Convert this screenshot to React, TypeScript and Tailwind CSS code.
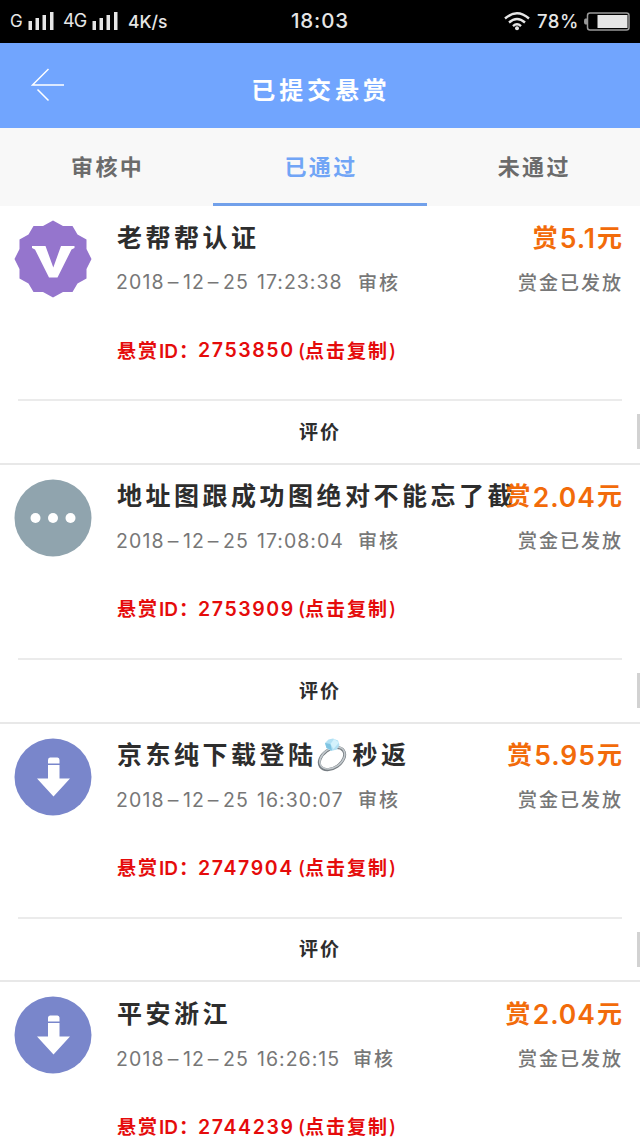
import type { ReactNode } from "react";

type IconKind = "verified" | "more" | "download";

interface Bounty {
  icon: IconKind;
  title: ReactNode;
  date: string;
  time: string;
  id: string;
  price: string;
}

function RingIcon() {
  return (
    <svg viewBox="0 0 32 34" className="-mt-[1px] mr-[4px] h-[34px] w-[32px] shrink-0" fill="none">
      <ellipse cx="15" cy="20.600" rx="14" ry="9.300" transform="rotate(-35 15 20.600)" stroke="#767d82" strokeWidth="3" />
      <ellipse cx="15.300" cy="20" rx="13.700" ry="9.400" transform="rotate(-35 15.300 20)" stroke="#c3c9cd" strokeWidth="1.600" />
      <path d="M8 5l3.500-3.500L16 .5l5 2 1.500 4.500-2.500 4.500-6 1.500-4.500-3z" fill="#b3e1f4" />
      <path d="M8 5l5.500 1 1.500 6.500-5.500-2.500z" fill="#7fc4e2" />
      <path d="M13.500 6L17 1l5 3.500-5.500 6.500z" fill="#d4f2fc" />
    </svg>
  );
}

const bounties: Bounty[] = [
  { icon: "verified", title: "老帮帮认证", date: "2018-12-25", time: "17:23:38", id: "2753850", price: "5.1" },
  { icon: "more", title: "地址图跟成功图绝对不能忘了截", date: "2018-12-25", time: "17:08:04", id: "2753909", price: "2.04" },
  {
    icon: "download",
    title: (
      <>
        <span>京东纯下载登陆</span>
        <RingIcon />
        <span>秒返</span>
      </>
    ),
    date: "2018-12-25",
    time: "16:30:07",
    id: "2747904",
    price: "5.95",
  },
  { icon: "download", title: "平安浙江", date: "2018-12-25", time: "16:26:15", id: "2744239", price: "2.04" },
];

function BountyIcon({ kind }: { kind: IconKind }) {
  if (kind === "verified") {
    return (
      <svg viewBox="0 0 78 78" className="h-[78px] w-[78px]">
        <path
          d="M39 0.500L49 6H58.500L63.500 14.500L72.500 19.500V29L77.500 39L72.500 49V58.500L63.500 63.500L58.500 72H49L39 77.500L29 72H19.500L14.500 63.500L5.500 58.500V49L0.500 39L5.500 29V19.500L14.500 14.500L19.500 6H29Z"
          fill="#9575cd"
        />
        <path d="M18 26H31.500L39.300 47.500L47 26H60.500V28L57.500 29.500L43.500 57.500H35L21 29.500L18 28Z" fill="#fff" />
      </svg>
    );
  }
  if (kind === "more") {
    return (
      <svg viewBox="0 0 78 78" className="h-[78px] w-[78px]">
        <circle cx="39" cy="39" r="38.500" fill="#90a4ae" />
        <circle cx="21.500" cy="39" r="5" fill="#fff" />
        <circle cx="39" cy="39" r="5" fill="#fff" />
        <circle cx="56.500" cy="39" r="5" fill="#fff" />
      </svg>
    );
  }
  return (
    <svg viewBox="0 0 78 78" className="h-[78px] w-[78px]">
      <circle cx="39" cy="39" r="38.500" fill="#7986cb" />
      <path d="M34 25.500V22Q34 19.500 36 19.500H43.500Q45.500 19.500 45.500 22V25.500Z" fill="#fff" />
      <path d="M34 27H45.500V40.500H56L39.500 58.500L23 40.500H34Z" fill="#fff" />
    </svg>
  );
}

function DateText({ value }: { value: string }) {
  const [year, month, day] = value.split("-");
  const dash = <span className="inline-block w-[18px] scale-x-[1.7] text-center">-</span>;
  return (
    <span className="-ml-[1px] flex tracking-[1.100px]">
      <span className="w-[49px]">{year}</span>
      {dash}
      <span className="w-[22px]">{month}</span>
      {dash}
      <span className="w-[34px]">{day}</span>
    </span>
  );
}

function BountyRow({ item }: { item: Bounty }) {
  return (
    <section className="flex h-[258.800px] shrink-0 flex-col border-b-2 border-[#e8e8e8] bg-white">
      <div className="flex h-[193px] shrink-0 pt-[14px] pr-[18px] pl-[14px]">
        <div className="w-[103px] shrink-0">
          <BountyIcon kind={item.icon} />
        </div>
        <div className="min-w-0 flex-1">
          <div className="flex h-[36px] items-center leading-none whitespace-nowrap">
            <h2 className="flex w-0 flex-1 items-center text-[25px] font-bold tracking-[3.500px] text-[#2d2d2d]">{item.title}</h2>
            <div className="z-10 flex items-center font-bold text-[#f26b0a]">
              <span className="mr-[2px] text-[25px]">赏</span>
              <span className="text-[26.500px] font-semibold tracking-[1px]">{item.price}</span>
              <span className="ml-[1px] text-[25px]">元</span>
            </div>
          </div>
          <div className="mt-[9px] flex h-[36px] items-center justify-between text-[19.500px] leading-none whitespace-nowrap text-[#777]">
            <div className="flex items-center">
              <DateText value={item.date} />
              <span className={item.time === "16:26:15" ? "w-[96px] tracking-[1px]" : "w-[101px] tracking-[1px]"}>{item.time}</span>
              <span className="text-[19px] font-medium tracking-[2px]">审核</span>
            </div>
            <span className="-mr-[1px] text-[19px] font-medium tracking-[2px]">赏金已发放</span>
          </div>
          <div className="mt-[32px] flex h-[36px] items-center text-[19px] leading-none font-bold whitespace-nowrap text-[#e50b0b]">
            <span className="w-[42px] tracking-[2px]">悬赏</span>
            <span className="w-[20px] text-[19px] font-semibold">ID</span>
            <span className="w-[19px]">：</span>
            <span className="w-[100px] text-[19.500px] font-semibold tracking-[1.600px]">{item.id}</span>
            <span className="w-[7px] font-medium">(</span>
            <span className="tracking-[2px]">点击复制</span>
            <span className="font-medium">)</span>
          </div>
        </div>
      </div>
      <div className="mx-[18px] h-[2px] shrink-0 bg-[#ebebeb]" />
      <div className="grid min-h-0 flex-1 grid-cols-[3px_1fr_3px] items-center">
        <span />
        <button className="mt-[1px] text-center text-[19px] leading-none font-bold tracking-[2px] text-[#2d2d2d]">评价</button>
        <span className="h-[35px] bg-[#d2d2d2]" />
      </div>
    </section>
  );
}

function Signal() {
  return (
    <svg viewBox="0 0 26 18" className="h-[18px] w-[26px]" fill="#e6e6e6">
      <path d="M0.500 9H4V18H0.500ZM7.500 6H11V18H7.500ZM14.500 3H18V18H14.500ZM22 0H25.500V18H22Z" />
    </svg>
  );
}

function StatusBar() {
  return (
    <header className="grid h-[42.500px] shrink-0 grid-cols-[1fr_auto_1fr] items-center bg-black pr-[10px] pl-[10px] text-[#e6e6e6]">
      <div className="flex items-center text-[18px] leading-none">
        <span className="w-[18px] text-[17px]">G</span>
        <Signal />
        <span className="ml-[9px] w-[29px] tracking-[-1px]">4G</span>
        <Signal />
        <span className="ml-[10px] text-[17.500px] font-medium">4K/s</span>
      </div>
      <span className="text-[20.500px] leading-none font-medium tracking-[0.900px]">18:03</span>
      <div className="flex items-center justify-end leading-none">
        <svg viewBox="0 0 26 19" className="h-[19px] w-[26px]" fill="none" stroke="#e6e6e6" strokeWidth="2.400">
          <path d="M1 6.500Q13-4 25 6.500M5 10.500Q13 3.500 21 10.500M9 14.200Q13 10.500 17 14.200" />
          <circle cx="13" cy="16.300" r="2" fill="#e6e6e6" stroke="none" />
        </svg>
        <span className="ml-[7px] w-[47px] text-[18.500px] font-medium tracking-[0.500px]">78%</span>
        <svg viewBox="0 0 46 19" className="h-[19px] w-[46px]">
          <path d="M3 6.500H1.500Q0 6.500 0 9.500Q0 12.500 1.500 12.500H3Z" fill="#999" />
          <rect x="3.500" y="1" width="41.500" height="17" rx="2.500" fill="none" stroke="#999" strokeWidth="1.500" />
          <rect x="13.500" y="3" width="30" height="13" fill="#e6e6e6" />
        </svg>
      </div>
    </header>
  );
}

export default function App() {
  return (
    <main className="flex h-[1137px] w-[640px] flex-col overflow-hidden bg-white font-['Inter','Noto_Sans_CJK_SC',sans-serif]">
      <StatusBar />
      <div className="grid h-[85px] shrink-0 grid-cols-[1fr_auto_1fr] items-center bg-[#71a5fe] text-white">
        <svg viewBox="0 0 34 34" className="ml-[31px] h-[34px] w-[34px]" fill="none" stroke="#fff" strokeWidth="1.500">
          <path d="M17.500 1L1.500 17H33M6.500 21.500L17.500 32.500" />
        </svg>
        <h1 className="mt-[11px] ml-[2px] text-[24px] leading-none font-bold tracking-[3.900px]">已提交悬赏</h1>
      </div>
      <nav className="grid h-[78.500px] shrink-0 grid-cols-3 bg-[#f8f8f8] text-[22px] leading-none font-bold tracking-[2.400px] text-[#6b6b6b]">
        <button className="border-b-[3px] border-transparent pt-[3px] pl-[2px]">审核中</button>
        <button className="border-b-[3px] border-[#71a0ea] pt-[3px] pl-[2px] text-[#71a5f6]">已通过</button>
        <button className="border-b-[3px] border-transparent pt-[3px] pl-[2px]">未通过</button>
      </nav>
      {bounties.map((item) => (
        <BountyRow key={item.id} item={item} />
      ))}
    </main>
  );
}
